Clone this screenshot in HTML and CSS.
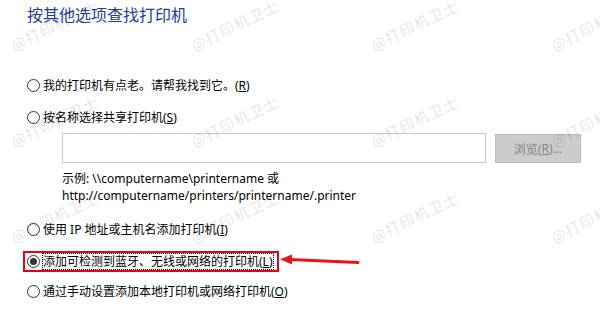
FILE: index.html
```html
<!DOCTYPE html>
<html lang="zh-CN">
<head>
<meta charset="utf-8">
<title>按其他选项查找打印机</title>
<link rel="stylesheet" href="styles.css">
</head>
<body>
<div class="page">
  <h1 class="title">按其他选项查找打印机</h1>
  <div class="opt r1"><span class="radio"></span><span class="lbl">我的打印机有点老。请帮我找到它。(<u>R</u>)</span></div>
  <div class="opt r2"><span class="radio"></span><span class="lbl">按名称选择共享打印机(<u>S</u>)</span></div>
  <div class="share">
    <div class="inrow">
      <div class="input"></div>
      <div class="btn">浏览(<u>R</u>)...</div>
    </div>
    <div class="example">示例: \\computername\printername 或<br>http://computername/printers/printername/.printer</div>
  </div>
  <div class="opt r3"><span class="radio"></span><span class="lbl">使用 IP 地址或主机名添加打印机(<u>I</u>)</span></div>
  <div class="opt sel"><span class="radio on"></span><span class="lbl focus">添加可检测到蓝牙、无线或网络的打印机(<u>L</u>)</span></div>
  <div class="opt r5"><span class="radio"></span><span class="lbl">通过手动设置添加本地打印机或网络打印机(<u>O</u>)</span></div>
</div>

<svg class="arrow" viewBox="0 0 86 18" width="86" height="18" aria-hidden="true">
  <line x1="14" y1="9.6" x2="82" y2="12.6" stroke="#e8141b" stroke-width="3" stroke-linecap="round"/>
  <polygon points="4,9.3 16,4.6 16,14.4" fill="#e8141b"/>
</svg>

<div class="wm" aria-hidden="true">
  <span class="w x0 y0">@打印机卫士</span><span class="w x1 y0">@打印机卫士</span><span class="w x2 y0">@打印机卫士</span><span class="w x3 y0">@打印机卫士</span>
  <span class="w x0 y1">@打印机卫士</span><span class="w x1 y1">@打印机卫士</span><span class="w x2 y1">@打印机卫士</span><span class="w x3 y1">@打印机卫士</span>
  <span class="w x0 y2">@打印机卫士</span><span class="w x1 y2">@打印机卫士</span><span class="w x2 y2">@打印机卫士</span><span class="w x3 y2">@打印机卫士</span>
</div>
</body>
</html>
```

FILE: styles.css
```css
html, body {
  margin: 0;
  padding: 0;
}
body {
  width: 600px;
  height: 318px;
  overflow: hidden;
  position: relative;
  background: #ffffff;
  color: #000000;
  font-family: "Noto Sans", "Noto Sans CJK SC", sans-serif;
  font-size: 12px;
}
.page {
  padding-left: 27px;
}
.title {
  margin: 0;
  height: 29px;
  line-height: 29px;
  font-size: 16px;
  font-weight: normal;
  color: #1a3d9e;
  font-family: "Noto Sans CJK SC", sans-serif;
}
.opt {
  display: flex;
  align-items: center;
  gap: 2px;
  height: 20px;
}
.r1 { margin-top: 46px; }
.r2 { margin-top: 12px; }
.r3 { margin-top: 15px; }
.r5 { margin-top: 9px; }
.sel {
  margin-top: 12px;
  margin-left: -4px;
  padding-left: 2px;
  width: 250px;
  height: 17px;
  border: 2px solid #e60012;
}
.radio {
  flex: none;
  width: 11px;
  height: 11px;
  border: 1px solid #333333;
  border-radius: 50%;
  display: flex;
  align-items: center;
  justify-content: center;
}
.radio.on::after {
  content: "";
  width: 7px;
  height: 7px;
  border-radius: 50%;
  background: #333333;
}
.lbl {
  white-space: nowrap;
  line-height: 15px;
  border: 1px solid transparent;
}
.lbl.focus {
  border: 1px dotted #000000;
}
u {
  text-decoration-thickness: 1px;
  text-underline-offset: 1px;
}
.share {
  margin-left: 35px;
  margin-top: 6px;
}
.inrow {
  display: flex;
  align-items: flex-start;
  gap: 9px;
}
.input {
  width: 422px;
  height: 28px;
  border: 1px solid #c8c8c8;
  background: #ffffff;
}
.btn {
  width: 84px;
  height: 27px;
  margin-top: 1px;
  border: 1px solid #bcbcbc;
  background: #cccccc;
  color: #838383;
  display: flex;
  align-items: center;
  justify-content: center;
}
.example {
  margin-top: 7px;
  line-height: 17px;
  white-space: nowrap;
}
.arrow {
  position: absolute;
  left: 276px;
  top: 250px;
}
.wm {
  position: absolute;
  inset: 0;
  pointer-events: none;
}
.w {
  position: absolute;
  font-family: "Noto Sans CJK SC", sans-serif;
  font-size: 15px;
  line-height: 16px;
  letter-spacing: 1px;
  color: rgba(0, 0, 0, 0.12);
  white-space: nowrap;
  transform-origin: 0 50%;
  transform: rotate(-26deg);
}
.x0 { left: 12px; }
.x1 { left: 192px; }
.x2 { left: 372px; }
.x3 { left: 552px; }
.y0 { top: 38px; }
.y1 { top: 134px; }
.y2 { top: 230px; }
```
